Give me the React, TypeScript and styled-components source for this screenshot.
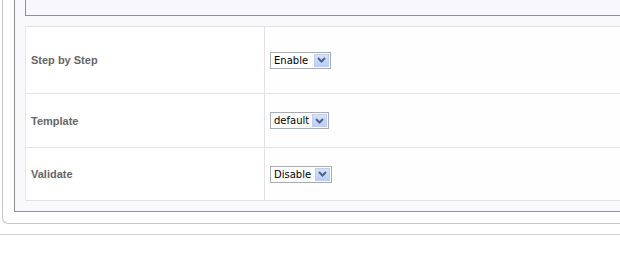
import React from "react";
import styled, { createGlobalStyle } from "styled-components";

const Global = createGlobalStyle`
  html, body { margin: 0; padding: 0; background: #ffffff; overflow: hidden; }
  body { width: 620px; height: 270px; font-family: "Liberation Sans", Arial, sans-serif; }
`;

const Page = styled.div`
  width: 620px;
  box-sizing: border-box;
  padding-left: 2px;
  margin-top: -19px;
  overflow: hidden;
`;

const OuterBox = styled.div`
  margin-right: -12px;
  border-left: 1px solid #c8c8c8;
  border-bottom: 1px solid #c8c8c8;
  border-bottom-left-radius: 6px;
  padding: 0 0 11px 11px;
  background: #ffffff;
`;

const PanelBox = styled.div`
  border-left: 1px solid #8c9294;
  border-bottom: 1px solid #8c9294;
  background: #f9f9fc;
  padding: 0 0 10px 10px;
`;

const TopBox = styled.div`
  height: 34px;
  border-left: 1px solid #8c9294;
  border-bottom: 1px solid #8c9294;
  background: #f8f8fc;
  margin-bottom: 10px;
`;

const Table = styled.div`
  display: grid;
  grid-template-columns: 239px 1fr;
  border-top: 1px solid #e2e2e4;
  border-left: 1px solid #e6e6e8;
  background: #ffffff;
`;

const LabelCell = styled.div<{ $h: number }>`
  height: ${(p) => p.$h}px;
  box-sizing: border-box;
  border-bottom: 1px solid #e2e2e4;
  border-right: 1px solid #e2e2e4;
  display: flex;
  align-items: center;
  padding-left: 5px;
  font-size: 11px;
  font-weight: bold;
  color: #666666;
`;

const ValueCell = styled.div<{ $h: number }>`
  height: ${(p) => p.$h}px;
  box-sizing: border-box;
  border-bottom: 1px solid #e2e2e4;
  display: flex;
  align-items: center;
  padding-left: 5px;
  background: #fefefe;
`;

const Select = styled.div<{ $w: number }>`
  width: ${(p) => p.$w}px;
  height: 17px;
  box-sizing: border-box;
  border: 1px solid #a5acb2;
  background: #ffffff;
  display: flex;
  align-items: center;
  justify-content: space-between;
  padding: 1px 1px 1px 3px;
  font-family: "DejaVu Sans", Tahoma, sans-serif;
  font-size: 10px;
  color: #000000;
`;

const ArrowBtn = styled.span`
  width: 15px;
  height: 13px;
  box-sizing: border-box;
  border: 1px solid #bccdf4;
  background: linear-gradient(#d6e2fd, #b9cdf7);
  display: flex;
  align-items: center;
  justify-content: center;
`;

const BottomRule = styled.div`
  margin-top: 10px;
  margin-left: -2px;
  height: 1px;
  background: #d6d6d6;
`;

const Chevron = () => (
  <svg width="9" height="6" viewBox="0 0 9 6">
    <path d="M1 1 L4.5 4.5 L8 1" fill="none" stroke="#4d6185" strokeWidth="2" />
  </svg>
);

const rows = [
  { label: "Step by Step", value: "Enable", w: 61, h: 67 },
  { label: "Template", value: "default", w: 59, h: 54 },
  { label: "Validate", value: "Disable", w: 62, h: 53 },
];

export default function App() {
  return (
    <>
      <Global />
      <Page>
        <OuterBox>
          <PanelBox>
            <TopBox />
            <Table>
              {rows.map((r) => (
                <React.Fragment key={r.label}>
                  <LabelCell $h={r.h}>{r.label}</LabelCell>
                  <ValueCell $h={r.h}>
                    <Select $w={r.w}>
                      <span>{r.value}</span>
                      <ArrowBtn>
                        <Chevron />
                      </ArrowBtn>
                    </Select>
                  </ValueCell>
                </React.Fragment>
              ))}
            </Table>
          </PanelBox>
        </OuterBox>
        <BottomRule />
      </Page>
    </>
  );
}
